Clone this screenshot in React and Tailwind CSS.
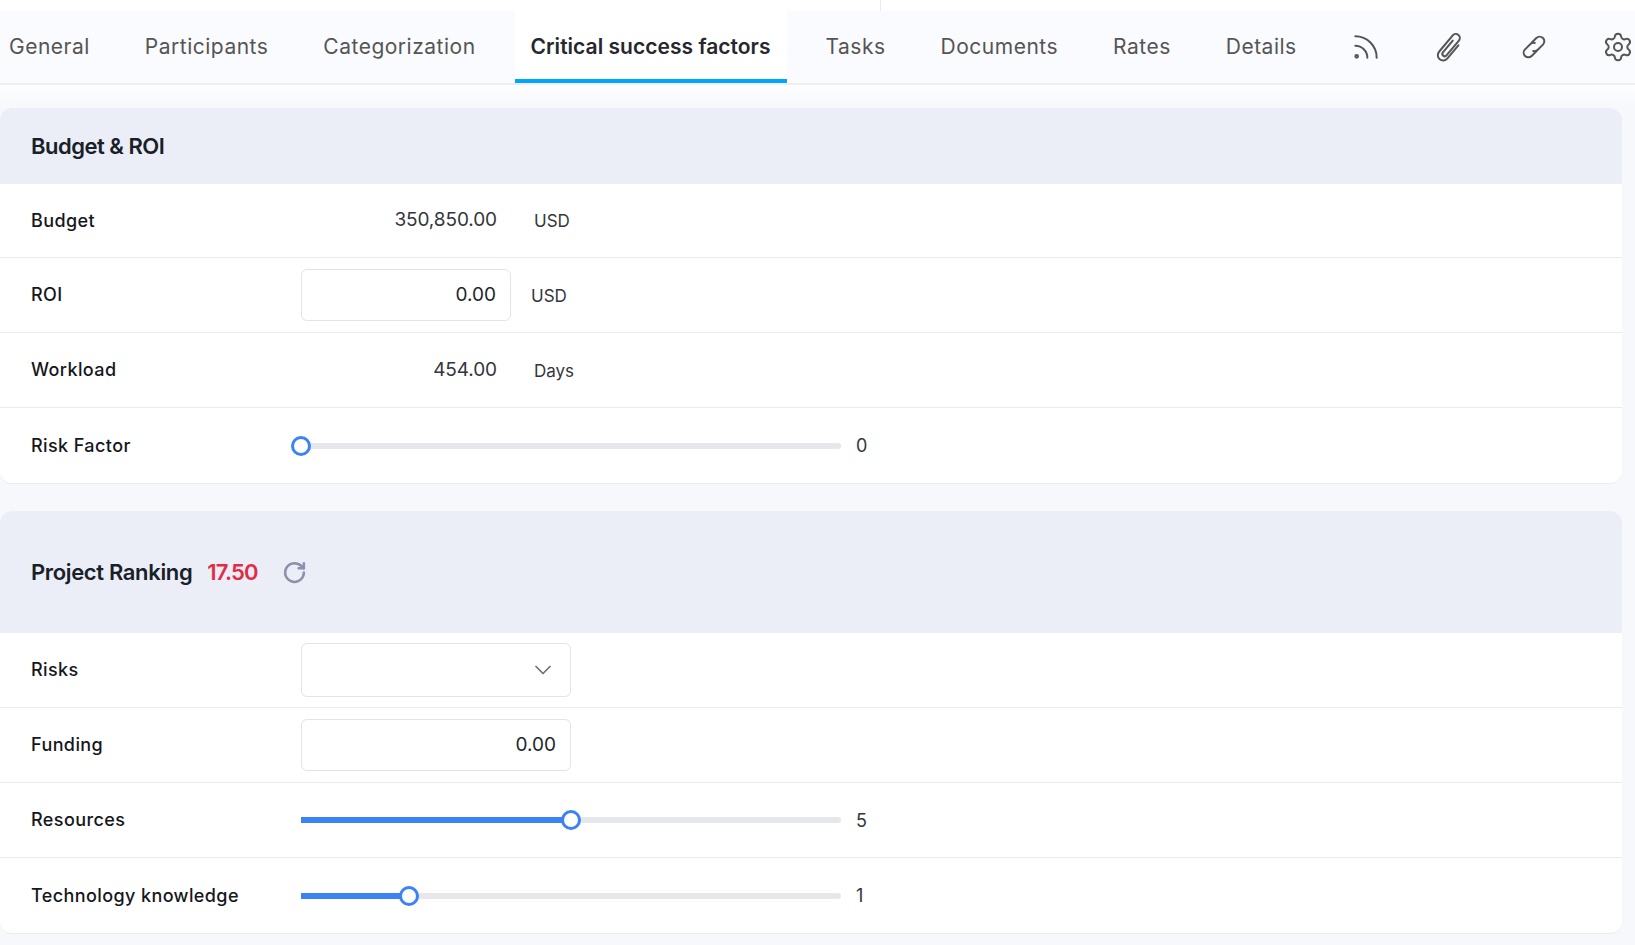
import { ChevronDown, RotateCw, Rss, Settings } from "lucide-react";

const tabs = ["General", "Participants", "Categorization", "Critical success factors", "Tasks", "Documents", "Rates", "Details"];

const Paperclip = () => (
    <svg width="32" height="32" viewBox="0 0 24 24" fill="none" stroke="currentColor" strokeWidth="1.5" strokeLinecap="round" className="shrink-0 overflow-visible">
        <g transform="rotate(40 12 12)">
            <path d="M16 7v13a4 4 0 0 1-8 0V4a3 3 0 0 1 6 0v14.5a1.75 1.75 0 0 1-3.5 0V7" />
        </g>
    </svg>
);

const ChainLink = () => (
    <svg width="32" height="32" viewBox="0 0 24 24" fill="none" stroke="currentColor" strokeWidth="1.5" strokeLinecap="round" className="shrink-0 overflow-visible">
        <g transform="rotate(45 12 12)">
            <path d="M8.5 11V6a3.5 3.5 0 0 1 7 0v5.5a3.5 3.5 0 0 1-1.8 3" />
            <path d="M15.5 13v5a3.5 3.5 0 0 1-7 0v-5.5a3.5 3.5 0 0 1 1.8-3" />
        </g>
    </svg>
);

const Row = ({ label, height = "h-[75px]", last, children }) => (
    <div className={`flex items-center px-[31px] ${height} ${last ? "" : "border-b border-[#e9ebf0]"}`}>
        <div className="w-[270px] -mt-[1px] shrink-0 text-[18px] font-medium tracking-[0.4px] text-[#15171c]">{label}</div>
        {children}
    </div>
);

const NumberBox = ({ width, value }) => (
    <div className={`${width} h-[52px] flex items-center justify-end pr-[14px] bg-white border border-[#e2e3ec] rounded-[6px] text-[19px] text-[#22252b]`}>
        {value}
    </div>
);

const Slider = ({ percent, value }) => (
    <div className="flex items-center">
        <div className="relative w-[540px] h-[6px] rounded-r-full bg-[#e5e7eb]">
            <div className="h-full bg-[#3b82f6]" style={{ width: `${percent}%` }}></div>
            <div
                className="absolute top-1/2 -translate-x-1/2 -translate-y-1/2 w-[20px] h-[20px] rounded-full bg-white border-[3px] border-[#3b82f6]"
                style={{ left: `${percent}%` }}></div>
        </div>
        <span className="ml-[15px] text-[18px] text-[#33363c]">{value}</span>
    </div>
);

const App = () => {
    return (
        <div className="w-full h-[945px] overflow-hidden bg-[#f6f8fc] font-['Inter','Liberation_Sans',sans-serif]">
            {/* top strip */}
            <div className="h-[11px] bg-white flex">
                <div className="ml-[880px] w-px h-full bg-[#e9ebf0]"></div>
            </div>

            {/* tabs */}
            <div className="h-[74px] flex items-stretch bg-[#fafbfe] border-b-2 border-[#edeef2] overflow-hidden">
                <div className="flex items-stretch gap-[23px] -ml-[7px]">
                    {tabs.map((tab) => (
                        <div
                            key={tab}
                            className={tab === "Critical success factors"
                                ? "flex items-center px-4 pt-[4px] bg-white border-b-4 border-[#00a6fb] text-[21px] font-semibold tracking-[0.03px] text-[#26282d]"
                                : "flex items-center px-4 text-[21px] tracking-[0.5px] text-[#555555]"}>
                            {tab}
                        </div>
                    ))}
                </div>
                <div className="flex items-center text-[#555555] ml-[37px] gap-[52px]">
                    <Rss size={32} strokeWidth={1.5} />
                    <Paperclip />
                    <ChainLink />
                    <Settings size={32} strokeWidth={1.5} />
                </div>
            </div>

            <div className="h-[23px] bg-gradient-to-b from-[#fdfdfe] to-[#f6f8fc]"></div>

            {/* budget */}
            <div className="mr-[13px] bg-white rounded-xl border-b border-[#e9ebf0] overflow-hidden">
                <div className="h-[76px] flex items-center px-[31px] bg-[#ebeef6] text-[22px] font-semibold tracking-[-0.5px] text-[#1a2029]">
                    Budget &amp; ROI
                </div>
                <Row label="Budget" height="h-[74px]">
                    <span className="w-[196px] text-right text-[19px] tracking-[-0.1px] text-[#33363c]">350,850.00</span>
                    <span className="ml-[37px] mt-[3px] text-[17px] text-[#33363c]">USD</span>
                </Row>
                <Row label="ROI">
                    <NumberBox width="w-[210px]" value="0.00" />
                    <span className="ml-[20px] mt-[3px] text-[17px] text-[#33363c]">USD</span>
                </Row>
                <Row label="Workload">
                    <span className="w-[196px] text-right text-[19px] tracking-[-0.1px] text-[#33363c]">454.00</span>
                    <span className="ml-[37px] mt-[3px] text-[17px] text-[#33363c]">Days</span>
                </Row>
                <Row label="Risk Factor" height="h-[75px]" last>
                    <Slider percent={0} value={0} />
                </Row>
            </div>

            {/* ranking */}
            <div className="mt-[27px] mr-[13px] bg-white rounded-xl border-b border-[#e9ebf0] overflow-hidden">
                <div className="h-[122px] flex items-center px-[31px] bg-[#ebeef6] text-[22px] font-semibold">
                    <span className="tracking-[-0.35px] text-[#1a2029]">Project Ranking</span>
                    <span className="ml-[15px] tracking-[-0.8px] text-[#e02d45]">17.50</span>
                    <RotateCw size={25} strokeWidth={2.4} className="ml-[24px] text-[#8b90ab]" />
                </div>
                <Row label="Risks">
                    <div className="w-[270px] h-[54px] flex items-center justify-end pr-[13px] bg-white border border-[#e2e3ec] rounded-[6px] text-[#6b7280]">
                        <ChevronDown size={28} strokeWidth={1.5} />
                    </div>
                </Row>
                <Row label="Funding">
                    <NumberBox width="w-[270px]" value="0.00" />
                </Row>
                <Row label="Resources">
                    <Slider percent={50} value={5} />
                </Row>
                <Row label="Technology knowledge" last>
                    <Slider percent={20} value={1} />
                </Row>
            </div>
        </div>
    );
};

export default App;
